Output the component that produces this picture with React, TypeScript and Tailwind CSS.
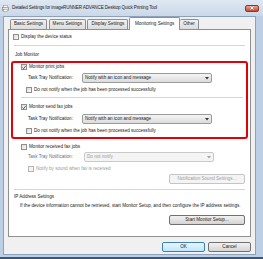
import React from "react";

function CheckBox({ checked, disabled }: { checked?: boolean; disabled?: boolean }) {
  return (
    <span
      className={`flex h-[6px] w-[6px] shrink-0 items-center justify-center border ${
        disabled ? "border-[#b5b5b5] bg-[#f4f4f4]" : "border-[#8f8f8f] bg-gradient-to-br from-[#dcdcdc] to-[#fafafa]"
      }`}
    >
      {checked && (
        <svg width="5" height="5" viewBox="0 0 5 5">
          <path d="M0.6 2.6 L2 4 L4.5 0.8" fill="none" stroke="#2a3f8f" strokeWidth="1.1" />
        </svg>
      )}
    </span>
  );
}

function Select({ value, disabled }: { value: string; disabled?: boolean }) {
  return (
    <div
      className={`flex h-[10px] w-[130px] items-center justify-between rounded-[2px] border px-[2px] ${
        disabled
          ? "border-[#c9c9c9] bg-[#f4f4f4] text-[#9a9a9a]"
          : "border-[#9a9a9a] bg-gradient-to-b from-[#f4f4f4] to-[#dcdcdc] text-[#1a1a1a]"
      }`}
    >
      <span>{value}</span>
      <svg width="4" height="3" viewBox="0 0 4 3">
        <path d="M0 0 H4 L2 2.5 Z" fill={disabled ? "#a0a0a0" : "#333"} />
      </svg>
    </div>
  );
}

function Button({ label, disabled, primary, className = "" }: { label: string; disabled?: boolean; primary?: boolean; className?: string }) {
  return (
    <div
      className={`flex h-[10px] items-center justify-center rounded-[2px] border ${
        disabled
          ? "border-[#c4c4c4] bg-[#f4f4f4] text-[#a0a0a0]"
          : primary
          ? "border-[#3c7fb1] bg-gradient-to-b from-[#eaf6fd] to-[#bee6fd] text-[#1a1a1a]"
          : "border-[#707070] bg-gradient-to-b from-[#f2f2f2] to-[#d4d4d4] text-[#1a1a1a]"
      } ${className}`}
    >
      {label}
    </div>
  );
}

export default function App() {
  const tabs = ["Basic Settings", "Menu Settings", "Display Settings"];
  return (
    <div
      className="flex h-[259px] w-[263px] flex-col overflow-hidden border-b-[2px] border-[#3a5776] bg-[#bccfe4] text-[4.6px] leading-none text-[#1a1a1a]"
      style={{ fontFamily: '"Liberation Sans", Arial, sans-serif' }}
    >
      {/* title bar */}
      <div className="flex h-[16px] shrink-0 items-center bg-gradient-to-b from-[#dfe8f2] to-[#c9d8e9] pl-[2px] pr-[4px]">
        <svg width="7" height="7" viewBox="0 0 7 7">
          <rect x="0.5" y="2.5" width="6" height="3" fill="#e8e8e8" stroke="#777" strokeWidth="0.6" />
          <rect x="1.5" y="0.5" width="4" height="2" fill="#fff" stroke="#888" strokeWidth="0.5" />
          <rect x="1.5" y="4.5" width="4" height="2" fill="#fff" stroke="#888" strokeWidth="0.5" />
        </svg>
        <span className="ml-[3px] tracking-[-0.15px] text-[#1e1e1e]">
          Detailed Settings for imageRUNNER ADVANCE Desktop Quick Printing Tool
        </span>
        <div className="ml-auto flex h-[7px] w-[14px] items-center justify-center rounded-[2px] border border-[#7a3d32] bg-gradient-to-b from-[#e8a394] to-[#c7432e]">
          <svg width="4" height="4" viewBox="0 0 4 4">
            <path d="M0.5 0.5 L3.5 3.5 M3.5 0.5 L0.5 3.5" stroke="#fff" strokeWidth="1" />
          </svg>
        </div>
      </div>

      {/* client */}
      <div className="mb-[2px] ml-[3px] mr-[7px] flex flex-1 flex-col border border-[#8da2ba] bg-[#f0f0f0] px-[4px]">
        {/* tabs */}
        <div className="ml-[2px] flex h-[12px] items-end">
          {tabs.map((t) => (
            <div
              key={t}
              className="mr-[1.5px] flex h-[10px] items-center rounded-t-[2px] border border-b-0 border-[#8e8f8f] bg-gradient-to-b from-[#f2f2f2] to-[#dcdcdc] px-[3px]"
            >
              {t}
            </div>
          ))}
          <div className="relative z-10 -mb-px -ml-[1px] flex h-[13px] items-center rounded-t-[2px] border border-b-0 border-[#8e8f8f] bg-white px-[5px]">
            Monitoring Settings
          </div>
          <div className="flex h-[10px] items-center rounded-t-[2px] border border-b-0 border-l-0 border-[#8e8f8f] bg-gradient-to-b from-[#f2f2f2] to-[#dcdcdc] px-[3px]">
            Other
          </div>
        </div>

        {/* panel */}
        <div className="flex h-[208px] flex-col border border-[#8e8f8f] bg-white px-[4px]">
          <div className="mt-[4px] flex h-[6px] items-center gap-[2px]">
            <CheckBox />
            <span>Display the device status</span>
          </div>
          <div className="mx-[1px] mt-[5px] h-px bg-[#d5d5d5]" />
          <div className="mt-[6px] ml-[2px] flex h-[6px] items-center">Job Monitor</div>

          {/* red highlight */}
          <div className="-mx-[2px] mt-[3px] flex h-[78px] flex-col rounded-[3px] border-[2px] border-[#e3000b] pl-[8px] pr-[3px]">
            <div className="mt-[1px] flex h-[6px] items-center gap-[2px]">
              <CheckBox checked />
              <span>Monitor print jobs</span>
            </div>
            <div className="mt-[3px] flex h-[10px] items-center">
              <span className="ml-[7px] w-[54px]">Task Tray Notification:</span>
              <Select value="Notify with an icon and message" />
            </div>
            <div className="mt-[4px] ml-[5px] flex h-[6px] items-center gap-[2px]">
              <CheckBox />
              <span>Do not notify when the job has been processed successfully</span>
            </div>
            <div className="mt-[4px] h-px bg-[#d5d5d5]" />
            <div className="mt-[6px] flex h-[6px] items-center gap-[2px]">
              <CheckBox checked />
              <span>Monitor send fax jobs</span>
            </div>
            <div className="mt-[4px] flex h-[10px] items-center">
              <span className="ml-[7px] w-[54px]">Task Tray Notification:</span>
              <Select value="Notify with an icon and message" />
            </div>
            <div className="mt-[4px] ml-[5px] flex h-[6px] items-center gap-[2px]">
              <CheckBox />
              <span>Do not notify when the job has been processed successfully</span>
            </div>
          </div>

          <div className="mt-[5px] ml-[8px] flex h-[6px] items-center gap-[2px]">
            <CheckBox />
            <span>Monitor received fax jobs</span>
          </div>
          <div className="mt-[2px] flex h-[10px] items-center">
            <span className="ml-[15px] w-[56px] text-[#6d6d6d]">Task Tray Notification:</span>
            <Select value="Do not notify" disabled />
          </div>
          <div className="mt-[4px] ml-[15px] flex h-[6px] items-center gap-[2px] text-[#9a9a9a]">
            <CheckBox disabled />
            <span>Notify by sound when fax is received</span>
          </div>
          <div className="mt-[2px] flex justify-end pr-[1px]">
            <Button label="Notification Sound Settings..." disabled className="w-[76px]" />
          </div>
          <div className="mx-[1px] mt-[5px] h-px bg-[#d5d5d5]" />
          <div className="mt-[4px] ml-[1px] flex h-[6px] items-center">IP Address Settings</div>
          <div className="mt-[2px] ml-[7px] leading-[8px]">
            If the device information cannot be retrieved, start Monitor Setup, and then configure the IP address settings.
          </div>
          <div className="mt-[5px] flex justify-end pr-[1px]">
            <Button label="Start Monitor Setup..." className="w-[76px]" />
          </div>
        </div>

        {/* footer */}
        <div className="mt-[5px] flex justify-end gap-[3px]">
          <Button label="OK" primary className="w-[43px]" />
          <Button label="Cancel" className="w-[43px]" />
        </div>
      </div>
    </div>
  );
}
